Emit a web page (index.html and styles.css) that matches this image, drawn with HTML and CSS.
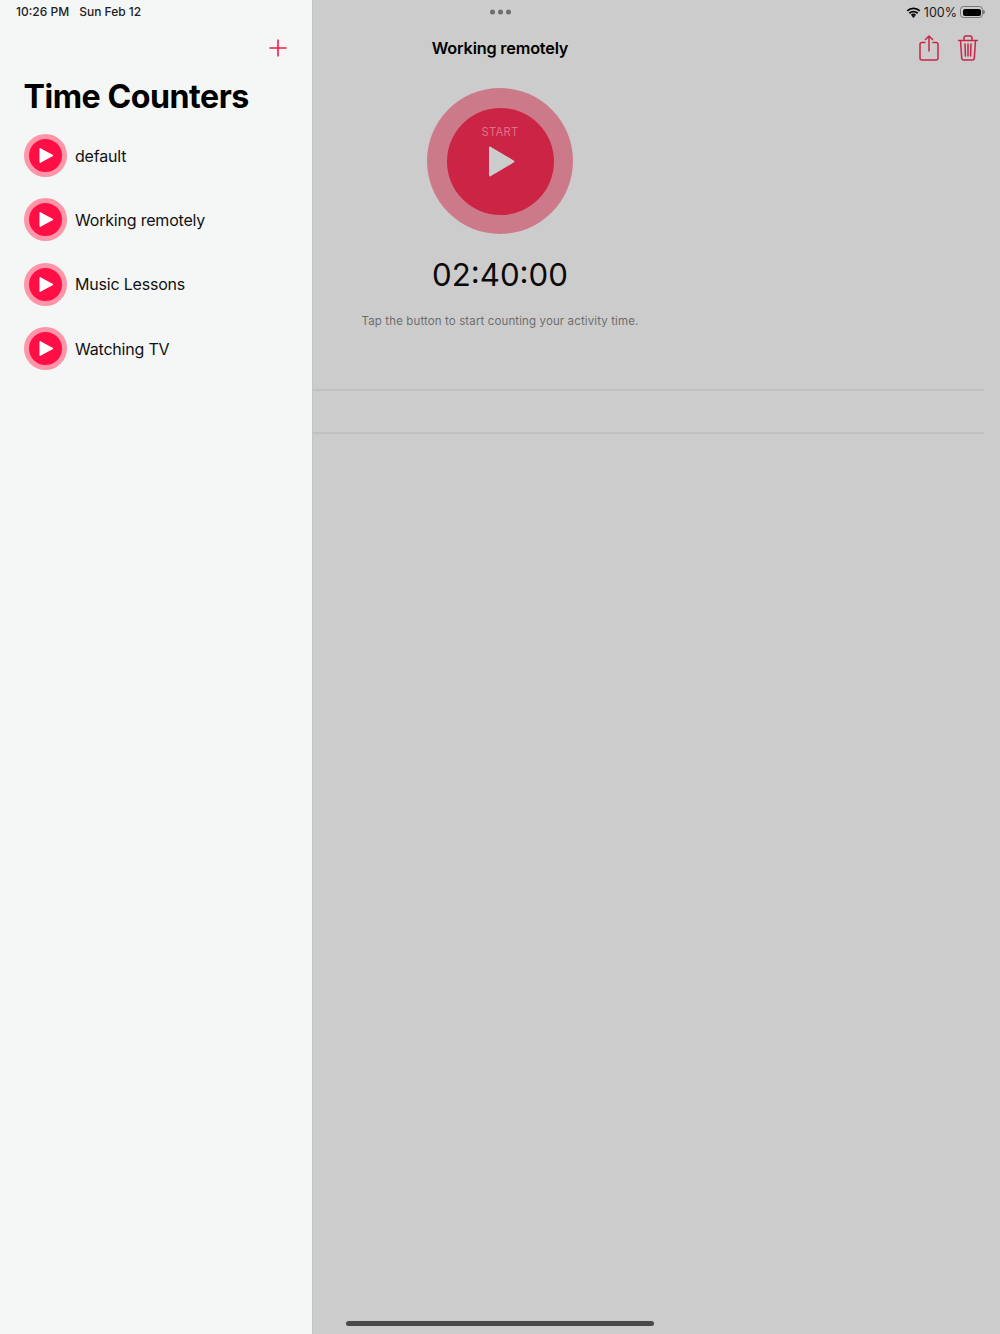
FILE: index.html

```html
<!DOCTYPE html>
<html lang="en">
<head>
  <meta charset="UTF-8" />
  <title>Time Counters</title>
  <link rel="stylesheet" href="styles.css">
</head>
<body>
  <div class="app">
    <aside class="sidebar">
      <div class="clock"><span>10:26 PM</span><span>Sun Feb 12</span></div>
      <div class="side-nav">
        <svg class="plus" width="18" height="18" viewBox="0 0 18 18"><path d="M9 .5v17M.5 9h17" /></svg>
      </div>
      <h1>Time Counters</h1>
      <ul class="counters">
        <li>
          <span class="mini-btn"><svg width="15" height="17" viewBox="0 0 16 18"><path d="M1 1.5v15L15 9z" /></svg></span>
          default
        </li>
        <li>
          <span class="mini-btn"><svg width="15" height="17" viewBox="0 0 16 18"><path d="M1 1.5v15L15 9z" /></svg></span>
          Working remotely
        </li>
        <li>
          <span class="mini-btn"><svg width="15" height="17" viewBox="0 0 16 18"><path d="M1 1.5v15L15 9z" /></svg></span>
          Music Lessons
        </li>
        <li>
          <span class="mini-btn"><svg width="15" height="17" viewBox="0 0 16 18"><path d="M1 1.5v15L15 9z" /></svg></span>
          Watching TV
        </li>
      </ul>
    </aside>

    <main class="main">
      <div class="status">
        <div class="dots"><i></i><i></i><i></i></div>
        <div class="status-right">
          <svg width="15" height="11" viewBox="0 0 16 12"><path class="wifi" d="M1.2 4.3a9.8 9.8 0 0 1 13.6 0M3.5 6.8a6.6 6.6 0 0 1 9 0M5.8 9.1a3.3 3.3 0 0 1 4.4 0" /><path d="M8 12 6.3 10.2a2.4 2.4 0 0 1 3.4 0z" /></svg>
          <span>100%</span>
          <span class="battery"><i></i></span>
        </div>
      </div>

      <header class="topbar">
        <div class="title">Working remotely</div>
        <div class="actions">
          <svg width="20" height="26" viewBox="0 0 20 26"><path d="M6 7.500H3a2 2 0 0 0-2 2V23a2 2 0 0 0 2 2h14a2 2 0 0 0 2-2V9.500a2 2 0 0 0-2-2h-3M10 16V1.500M6.500 4.500 10 1l3.500 3.500" /></svg>
          <svg width="20" height="26" viewBox="0 0 20 26"><path d="M.5 5.500h19M6 5.500V3a2 2 0 0 1 2-2h4a2 2 0 0 1 2 2v2.500M2.500 5.500l1.200 17.500a2 2 0 0 0 2 2h8.600a2 2 0 0 0 2-2L17.500 5.500M7 9l.4 12M10 9v12M13 9l-.4 12" /></svg>
        </div>
      </header>

      <section class="detail">
        <div class="start-ring">
          <div class="start-btn">
            <span class="start-label">START</span>
            <svg width="27" height="31" viewBox="0 0 27 31"><path d="M2 1.500v28L25.500 15.500z" /></svg>
          </div>
        </div>
        <div class="timer">02:40:00</div>
        <p class="hint">Tap the button to start counting your activity time.</p>
      </section>

      <div class="rows">
        <div class="row"></div>
      </div>

      <div class="home-bar"></div>
    </main>
  </div>
</body>
</html>
```

FILE: styles.css

```css
* {
  box-sizing: border-box;
}
body {
  margin: 0;
  font-family: Inter, "Noto Sans", sans-serif;
  color: #000;
  background: #ccc;
}
.app {
  display: flex;
  height: 1334px;
  overflow: hidden;
}

/* sidebar */
.sidebar {
  width: 313px;
  flex: none;
  background: #f5f7f7;
  border-right: 1px solid #c4c6c6;
}
.clock {
  display: flex;
  gap: 10px;
  height: 23px;
  padding-left: 16px;
  align-items: center;
  font-size: 12px;
  font-weight: 500;
  color: #222;
}
.side-nav {
  display: flex;
  justify-content: flex-end;
  height: 50px;
  padding: 16px 25px 0 0;
}
.plus path {
  fill: none;
  stroke: #ff1744;
  stroke-width: 1.6;
}
h1 {
  margin: 0;
  padding-left: 23.500px;
  font-size: 32.200px;
  line-height: 48px;
  font-weight: 700;
  letter-spacing: -0.5px;
}
.counters {
  list-style: none;
  margin: 2.500px 0 0;
  padding: 0 0 0 24px;
}
.counters li {
  display: flex;
  align-items: center;
  gap: 8px;
  height: 64.300px;
  font-size: 16px;
  letter-spacing: -0.2px;
  color: #111;
}
.mini-btn {
  display: flex;
  align-items: center;
  justify-content: center;
  width: 43px;
  height: 43px;
  border-radius: 50%;
  background: #ff0f45;
  border: 5.500px solid #ff96a8;
  padding-left: 2px;
}
.mini-btn path {
  fill: #fff;
  stroke: #fff;
  stroke-width: 1;
  stroke-linejoin: round;
}

/* detail side */
.main {
  flex: 1;
  position: relative;
}
.status {
  display: flex;
  height: 24px;
  align-items: center;
}
.dots {
  display: flex;
  gap: 3px;
  margin-left: 177px;
  transform: translateY(-0.5px);
}
.dots i {
  width: 5px;
  height: 5px;
  border-radius: 50%;
  background: #6e6e6e;
}
.status-right {
  display: flex;
  align-items: center;
  margin-left: auto;
  padding-right: 17px;
  font-size: 12.500px;
  color: #1a1a1a;
}
.status-right span:first-of-type {
  margin: 0 3px;
}
.status-right svg path {
  fill: #000;
}
.status-right svg path.wifi {
  fill: none;
  stroke: #000;
  stroke-width: 2;
}
.battery {
  position: relative;
  width: 23px;
  height: 12px;
  padding: 1.500px;
  border: 1px solid #777;
  border-radius: 3.500px;
}
.battery i {
  display: block;
  height: 100%;
  background: #000;
  border-radius: 2px;
}
.battery::after {
  content: "";
  position: absolute;
  right: -3px;
  top: 3px;
  width: 2px;
  height: 4px;
  background: #777;
  border-radius: 0 2px 2px 0;
}
.topbar {
  display: flex;
  align-items: center;
  height: 48px;
}
.title {
  width: 374px;
  text-align: center;
  font-size: 16.300px;
  font-weight: 600;
  letter-spacing: -0.2px;
}
.actions {
  display: flex;
  gap: 19px;
  margin-left: auto;
  padding-right: 22px;
}
.actions path {
  fill: none;
  stroke: #c9254a;
  stroke-width: 1.500;
  stroke-linecap: round;
  stroke-linejoin: round;
}
.detail {
  display: flex;
  flex-direction: column;
  align-items: center;
  width: 374px;
  padding-top: 16px;
}
.start-ring {
  display: flex;
  align-items: center;
  justify-content: center;
  width: 146px;
  height: 146px;
  border-radius: 50%;
  background: #cc7a8a;
}
.start-btn {
  position: relative;
  display: flex;
  align-items: center;
  justify-content: center;
  width: 107px;
  height: 107px;
  border-radius: 50%;
  background: #cc2444;
}
.start-label {
  position: absolute;
  top: 17px;
  left: 0;
  right: 0;
  text-align: center;
  font-size: 11.200px;
  letter-spacing: 0.3px;
  color: #e0708a;
}
.start-btn svg {
  margin-left: 3px;
}
.start-btn path {
  fill: #ccc;
  stroke: #ccc;
  stroke-width: 2;
  stroke-linejoin: round;
}
.timer {
  margin-top: 19px;
  font-size: 31.200px;
  line-height: 44px;
  color: #0a0a0a;
}
.hint {
  margin: 16px 0 0;
  font-size: 11.500px;
  letter-spacing: 0.12px;
  line-height: 16px;
  color: #6e6e6e;
}
.rows {
  margin: 60px 16px 0 0;
  border-top: 2px solid #c0c0c0;
}
.row {
  height: 43px;
  border-bottom: 2px solid #c0c0c0;
}
.home-bar {
  position: absolute;
  left: 33px;
  bottom: 8px;
  width: 308px;
  height: 5px;
  border-radius: 3px;
  background: #4a4a4a;
}
```
